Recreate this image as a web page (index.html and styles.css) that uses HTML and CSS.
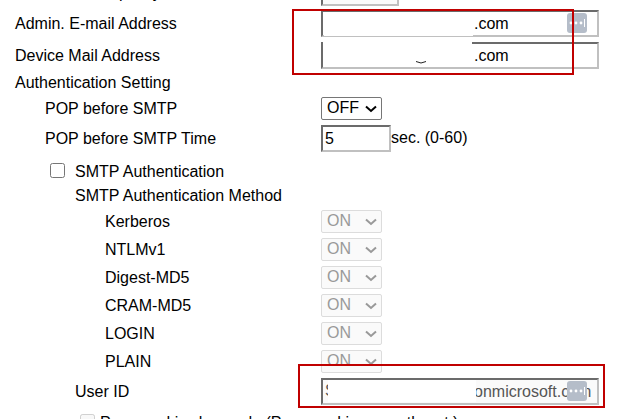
FILE: index.html
```
<!DOCTYPE html>
<html lang="en">
<head>
    <meta charset="UTF-8">
    <meta name="viewport" content="width=device-width, initial-scale=1.0">
    <title>E-mail Settings</title>
    <link rel="stylesheet" href="styles.css">
</head>
<body>
    <form class="settings">
        <div class="row first">
            <label class="name" for="capacity">Max. Email Capacity</label>
            <input class="box short" id="capacity" type="text" disabled>
        </div>
        <div class="marked">
            <div class="row">
                <label class="name" for="admin">Admin. E-mail Address</label>
                <div class="field wide">
                    <input class="box redacted" id="admin" type="text" value=".com">
                    <span class="mask mask-admin"></span>
                    <svg class="manager" viewBox="0 0 20 20"><rect width="20" height="20" rx="3" fill="#b5bdc9"/><g fill="#fff"><circle cx="4" cy="10" r="1.4"/><circle cx="9" cy="10" r="1.4"/><circle cx="14" cy="10" r="1.4"/><rect x="17" y="6" width="1" height="8"/></g></svg>
                </div>
            </div>
            <div class="row">
                <label class="name" for="device">Device Mail Address</label>
                <div class="field wide">
                    <input class="box redacted" id="device" type="text" value=".com">
                    <span class="mask mask-device"></span>
                    <svg class="tail" viewBox="0 0 12 3"><path d="M1 0.5Q6 3.5 11 0.5" fill="none" stroke="#222"/></svg>
                </div>
            </div>
            <div class="frame frame-mail"></div>
        </div>
        <div class="row title">Authentication Setting</div>
        <div class="row pop">
            <label class="name level-1" for="pop">POP before SMTP</label>
            <div class="picker">
                <select id="pop"><option>OFF</option><option>ON</option></select>
                <svg class="arrow" viewBox="0 0 12 8"><path d="M1 1.5L6 6L11 1.5" /></svg>
            </div>
        </div>
        <div class="row time">
            <label class="name level-1" for="time">POP before SMTP Time</label>
            <input class="box short" id="time" type="text" value="5">
            <span>sec. (0-60)</span>
        </div>
        <div class="row check">
            <input id="auth" type="checkbox">
            <label for="auth">SMTP Authentication</label>
        </div>
        <div class="row method">SMTP Authentication Method</div>
        <div class="row pick">
            <label class="name level-3" for="kerberos">Kerberos</label>
            <div class="picker off">
                <select id="kerberos" disabled><option>ON</option></select>
                <svg class="arrow" viewBox="0 0 12 8"><path d="M1 1.5L6 6L11 1.5" /></svg>
            </div>
        </div>
        <div class="row pick">
            <label class="name level-3" for="ntlm">NTLMv1</label>
            <div class="picker off">
                <select id="ntlm" disabled><option>ON</option></select>
                <svg class="arrow" viewBox="0 0 12 8"><path d="M1 1.5L6 6L11 1.5" /></svg>
            </div>
        </div>
        <div class="row pick">
            <label class="name level-3" for="digest">Digest-MD5</label>
            <div class="picker off">
                <select id="digest" disabled><option>ON</option></select>
                <svg class="arrow" viewBox="0 0 12 8"><path d="M1 1.5L6 6L11 1.5" /></svg>
            </div>
        </div>
        <div class="row pick">
            <label class="name level-3" for="cram">CRAM-MD5</label>
            <div class="picker off">
                <select id="cram" disabled><option>ON</option></select>
                <svg class="arrow" viewBox="0 0 12 8"><path d="M1 1.5L6 6L11 1.5" /></svg>
            </div>
        </div>
        <div class="row pick">
            <label class="name level-3" for="login">LOGIN</label>
            <div class="picker off">
                <select id="login" disabled><option>ON</option></select>
                <svg class="arrow" viewBox="0 0 12 8"><path d="M1 1.5L6 6L11 1.5" /></svg>
            </div>
        </div>
        <div class="row pick">
            <label class="name level-3" for="plain">PLAIN</label>
            <div class="picker off">
                <select id="plain" disabled><option>ON</option></select>
                <svg class="arrow" viewBox="0 0 12 8"><path d="M1 1.5L6 6L11 1.5" /></svg>
            </div>
        </div>
        <div class="row user">
            <label class="name level-2" for="user">User ID</label>
            <div class="field wide">
                <input class="box redacted" id="user" type="text" value="onmicrosoft.com" disabled>
                <span class="initial">S</span>
                <span class="mask mask-user"></span>
                <svg class="manager" viewBox="0 0 20 20"><rect width="20" height="20" rx="3" fill="#b5bdc9"/><g fill="#fff"><circle cx="4" cy="10" r="1.4"/><circle cx="9" cy="10" r="1.4"/><circle cx="14" cy="10" r="1.4"/><rect x="17" y="6" width="1" height="8"/></g></svg>
            </div>
            <div class="frame frame-user"></div>
        </div>
        <div class="row password">
            <input id="password" type="checkbox" disabled>
            <label for="password">Password is changed.&nbsp; (Password is currently set.)</label>
        </div>
    </form>
</body>
</html>
```

FILE: styles.css
```
html {
    overflow: hidden;
}

body {
    margin: 0;
    background-color: #ffffff;
    color: #000000;
    font-family: "Liberation Sans", Arial, sans-serif;
    font-size: 16px;
    line-height: 20px;
}

.settings {
    display: flex;
    flex-direction: column;
    margin-top: -23px;
    padding-left: 15px;
}

.row {
    display: flex;
    align-items: center;
    height: 32px;
}

.name {
    flex: 0 0 306px;
    box-sizing: border-box;
    padding-top: 2px;
}

.level-1 {
    padding-left: 30px;
}

.level-2 {
    padding-left: 60px;
}

.level-3 {
    padding-left: 90px;
}

.first {
    height: 30px;
}

.first .short {
    width: 78px;
}

.marked,
.user {
    position: relative;
}

.field {
    position: relative;
    display: flex;
}

.wide {
    width: 278px;
}

.box {
    box-sizing: border-box;
    width: 100%;
    height: 27px;
    padding: 2px 2px 0;
    border: 2px solid;
    border-color: #6b6b6b #c0c0c0 #c0c0c0 #6b6b6b;
    border-radius: 0;
    background-color: #ffffff;
    color: #000000;
    font: inherit;
}

.box:disabled {
    background-color: #fafafa;
    color: #555555;
}

.short {
    width: 70px;
}

.redacted {
    padding-left: 151px;
}

/* White patches over the hidden parts of the addresses */
.mask {
    position: absolute;
    background-color: #ffffff;
}

.mask-admin {
    left: 3px;
    top: 2px;
    width: 149px;
    height: 24px;
}

.mask-device {
    left: 2px;
    top: 0;
    width: 149px;
    height: 24px;
}

.mask-user {
    left: 7px;
    top: 2px;
    width: 148px;
    height: 22px;
}

.tail {
    position: absolute;
    left: 94px;
    top: 19px;
    width: 12px;
    height: 3px;
}

.initial {
    position: absolute;
    left: 4px;
    top: 3px;
    color: #555555;
}

.manager {
    position: absolute;
    right: 12px;
    top: 3px;
    width: 20px;
    height: 20px;
}

/* Red highlight frames */
.frame {
    position: absolute;
    box-sizing: border-box;
    border: 2px solid #c00000;
    pointer-events: none;
}

.frame-mail {
    left: 277px;
    top: 2px;
    width: 282px;
    height: 66px;
}

.frame-user {
    left: 283px;
    top: -11px;
    width: 307px;
    height: 44px;
}

.title {
    box-sizing: border-box;
    height: 22px;
    padding-top: 2px;
}

.pop {
    height: 30px;
}

.time {
    height: 30px;
}

.picker {
    position: relative;
    display: flex;
}

.picker select {
    appearance: none;
    box-sizing: border-box;
    width: 61px;
    height: 23px;
    margin: 0;
    padding: 0 5px;
    border: 1px solid #767676;
    border-radius: 2px;
    background-color: #ffffff;
    color: #000000;
    font: inherit;
}

.arrow {
    position: absolute;
    right: 5px;
    top: 8px;
    width: 12px;
    height: 8px;
    fill: none;
    stroke: #000000;
    stroke-width: 2;
    pointer-events: none;
}

.picker.off select {
    border-color: #dcdcdc;
    background-color: #fafafa;
    color: #999999;
    opacity: 1;
}

.off .arrow {
    stroke: #999999;
}

.check {
    height: 26px;
    margin-top: 6px;
    padding-left: 35px;
    gap: 10px;
}

.check input,
.password input {
    width: 15px;
    height: 15px;
    margin: 0 0 4px;
}

.method {
    height: 22px;
    padding-left: 60px;
}

.pick {
    height: 28px;
}

.password {
    height: 32px;
    padding-left: 65px;
    gap: 5px;
}
```
